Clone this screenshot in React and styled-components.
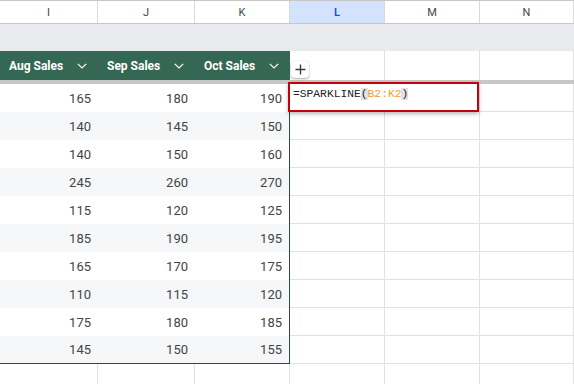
import React from 'react';
import styled, { createGlobalStyle } from 'styled-components';

const Global = createGlobalStyle`
  html, body { margin: 0; padding: 0; background: #fff; }
  * { box-sizing: border-box; }
`;

const COLS = '98px 97px 95px 95px 95px 94px';
const GRID = '#e1e1e1';
const TABLE_EDGE = '#2c4a3d';

const Sheet = styled.div`
  width: 574px;
  height: 384px;
  overflow: hidden;
  background: #fff;
  font-family: Roboto, "Liberation Sans", Arial, sans-serif;
`;

const ColHeaderRow = styled.div`
  display: grid;
  grid-template-columns: ${COLS};
  height: 24px;
  border-top: 1px solid #c7c7c7;
  border-bottom: 1px solid #c7c7c7;
`;

const ColHeader = styled.div`
  display: flex;
  align-items: center;
  justify-content: center;
  border-right: 1px solid #dadada;
  font-size: 11px;
  color: ${p => (p.$active ? '#0b57d0' : '#444')};
  font-weight: ${p => (p.$active ? 600 : 400)};
  background: ${p => (p.$active ? '#d3e3fd' : '#fff')};
`;

const GrayBand = styled.div`
  height: 27px;
  background: #e8eaed;
`;

const FrozenRow = styled.div`
  display: grid;
  grid-template-columns: ${COLS};
  height: 29px;
`;

const TableHead = styled.div`
  display: flex;
  align-items: center;
  justify-content: space-between;
  padding: 0 11px 0 9px;
  background: #356854;
  color: #fff;
  font-size: 12px;
  font-weight: 700;
`;

const EmptyCell = styled.div`
  position: relative;
  border-right: 1px solid ${GRID};
  border-bottom: ${p => (p.$noBottom ? 'none' : `1px solid ${GRID}`)};
`;

const AddButton = styled.div`
  position: absolute;
  left: 1px;
  top: 10px;
  width: 18px;
  height: 17px;
  background: #fff;
  border-radius: 4px;
  box-shadow: 0 1px 2px rgba(0, 0, 0, 0.3), 0 0 1px rgba(0, 0, 0, 0.2);
  display: flex;
  align-items: center;
  justify-content: center;
`;

const Divider = styled.div`
  height: 4px;
  background: #c7c7c7;
`;

const DataRow = styled.div`
  display: grid;
  grid-template-columns: ${COLS};
  height: 28px;
`;

const NumCell = styled.div`
  display: flex;
  align-items: center;
  justify-content: flex-end;
  padding-right: 7px;
  font-size: 13px;
  color: #444;
  background: ${p => (p.$alt ? '#f6f7f9' : '#fff')};
  border-right: ${p => (p.$edge ? `1px solid ${TABLE_EDGE}` : 'none')};
  border-bottom: ${p => (p.$bottom ? `1px solid ${TABLE_EDGE}` : 'none')};
`;

const Editor = styled.div`
  position: absolute;
  left: -2px;
  top: -2px;
  width: 191px;
  height: 30px;
  z-index: 2;
  background: #fff;
  border: 2px solid #c3000d;
  box-shadow: 0 2px 4px rgba(0, 0, 0, 0.28);
  padding: 4px 0 0 3px;
  font-family: "Liberation Mono", "DejaVu Sans Mono", monospace;
  font-size: 11.3px;
  line-height: 13px;
  color: #222;
  white-space: nowrap;
`;

const Paren = styled.span`
  background: #e2e2e2;
`;

const Ref = styled.span`
  color: #f29a2e;
`;

const Chevron = () => (
  <svg width="10" height="6" viewBox="0 0 10 6">
    <path d="M0.8 0.8 L5 5 L9.2 0.8" fill="none" stroke="#fff" strokeWidth="1.2" />
  </svg>
);

const Plus = () => (
  <svg width="11" height="11" viewBox="0 0 11 11">
    <path d="M5.5 0.5 V10.5 M0.5 5.5 H10.5" stroke="#3c3c3c" strokeWidth="1.4" />
  </svg>
);

const letters = ['I', 'J', 'K', 'L', 'M', 'N'];
const heads = ['Aug Sales', 'Sep Sales', 'Oct Sales'];
const data = [
  [165, 180, 190],
  [140, 145, 150],
  [140, 150, 160],
  [245, 260, 270],
  [115, 120, 125],
  [185, 190, 195],
  [165, 170, 175],
  [110, 115, 120],
  [175, 180, 185],
  [145, 150, 155],
];

export default function App() {
  return (
    <Sheet>
      <Global />
      <ColHeaderRow>
        {letters.map(l => (
          <ColHeader key={l} $active={l === 'L'}>{l}</ColHeader>
        ))}
      </ColHeaderRow>
      <GrayBand />
      <FrozenRow>
        {heads.map(h => (
          <TableHead key={h}>
            <span>{h}</span>
            <Chevron />
          </TableHead>
        ))}
        <EmptyCell $noBottom>
          <AddButton><Plus /></AddButton>
        </EmptyCell>
        <EmptyCell $noBottom />
        <EmptyCell $noBottom />
      </FrozenRow>
      <Divider />
      {data.map((row, i) => (
        <DataRow key={i}>
          {row.map((v, j) => (
            <NumCell key={j} $alt={i % 2 === 1} $edge={j === 2} $bottom={i === data.length - 1}>
              {v}
            </NumCell>
          ))}
          <EmptyCell>
            {i === 0 && (
              <Editor>
                =SPARKLINE<Paren>(</Paren><Ref>B2:K2</Ref><Paren>)</Paren>
              </Editor>
            )}
          </EmptyCell>
          <EmptyCell />
          <EmptyCell />
        </DataRow>
      ))}
      <DataRow>
        {letters.map(l => (
          <EmptyCell key={l} />
        ))}
      </DataRow>
    </Sheet>
  );
}
